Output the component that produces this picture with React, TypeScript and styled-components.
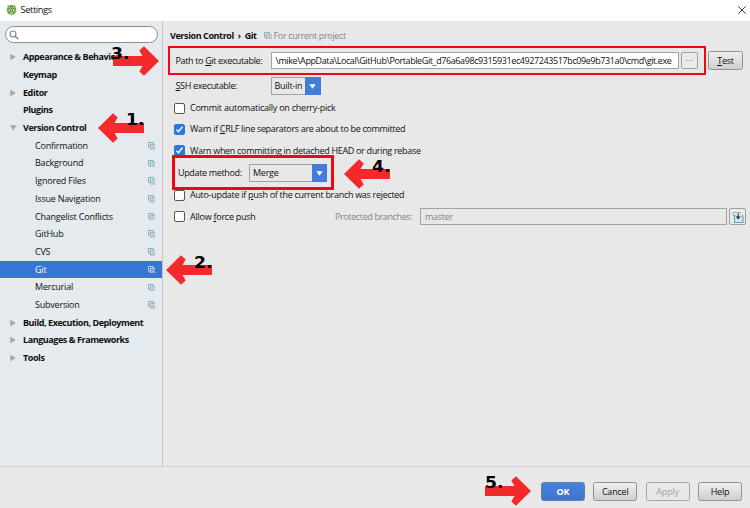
import React from "react";
import styled, { createGlobalStyle, css } from "styled-components";

const Global = createGlobalStyle`
  * { box-sizing: border-box; }
  body { margin: 0; background: #e8e8e8; }
`;

const Window = styled.div`
  position: relative;
  display: flex;
  flex-direction: column;
  width: 750px;
  height: 508px;
  overflow: hidden;
  background: #e8e8e8;
  color: #101010;
  font-family: "Open Sans", "Noto Sans", sans-serif;
  font-size: 9px;
  line-height: 14px;
  white-space: nowrap;
`;

const TitleBar = styled.header`
  display: flex;
  align-items: center;
  height: 21px;
  padding: 0 4.5px 2px 5.5px;
  background: #fff;
`;

const Title = styled.span`
  flex: 1;
  margin-left: 4px;
  font-size: 9.3px;
  letter-spacing: -0.4px;
`;

const Body = styled.div`
  display: flex;
  height: 446px;
  border-bottom: 1px solid #d0d0d0;
`;

const Sidebar = styled.aside`
  width: 163px;
  padding-top: 5px;
  background: #e4eaee;
  border-right: 1px solid #c3c5c7;
`;

const SearchBox = styled.div`
  display: flex;
  align-items: center;
  width: 153px;
  height: 17px;
  margin: 0 0 5.5px 5px;
  padding-left: 3px;
  background: #fff;
  border: 1px solid #8b8e90;
  border-radius: 9px;
`;

const TreeRow = styled.div<{ $selected?: boolean }>`
  display: flex;
  align-items: center;
  height: 17.69px;
  padding: 0 7px 0 10px;
  ${(p) => p.$selected && css`background: #3875d7; color: #fff;`}
`;

const Twisty = styled.span<{ $depth: number }>`
  display: flex;
  width: ${(p) => (p.$depth ? 25 : 13)}px;
`;

const TreeLabel = styled.span<{ $bold: boolean }>`
  flex: 1;
  font-weight: ${(p) => (p.$bold ? 700 : 400)};
  letter-spacing: ${(p) => (p.$bold ? -0.43 : -0.21)}px;
`;

const Content = styled.main`
  flex: 1;
  padding: 5px 3px 0 7px;
`;

const Line = styled.div<{ $h: number; $pad?: number }>`
  display: flex;
  align-items: center;
  height: ${(p) => p.$h}px;
  padding-left: ${(p) => p.$pad ?? 0}px;
`;

const Text = styled.span<{ $ls?: number; $bold?: boolean; $muted?: boolean; $w?: number }>`
  flex: none;
  width: ${(p) => (p.$w ? `${p.$w}px` : "auto")};
  font-weight: ${(p) => (p.$bold ? 700 : 400)};
  color: ${(p) => (p.$muted ? "#858585" : "inherit")};
  letter-spacing: ${(p) => p.$ls ?? -0.35}px;
  u { text-decoration-thickness: 1px; text-underline-offset: 1px; }
`;

const Chevron = styled.span`
  margin: 0 2px;
`;

const Field = styled.div<{ $w: number; $disabled?: boolean; $ls?: number }>`
  width: ${(p) => p.$w}px;
  height: 17px;
  padding-left: ${(p) => (p.$disabled ? 4 : 3.5)}px;
  overflow: hidden;
  line-height: ${(p) => (p.$disabled ? 16 : 15)}px;
  border: 1px solid #a3a3a3;
  background: ${(p) => (p.$disabled ? "#e8e8e8" : "#fff")};
  color: ${(p) => (p.$disabled ? "#858585" : "#101010")};
  letter-spacing: ${(p) => p.$ls ?? -0.3}px;
`;

const MiniButton = styled.button`
  display: flex;
  align-items: center;
  justify-content: center;
  width: 17px;
  height: 17px;
  margin: 0 0 0 2px;
  padding: 0;
  border: 1px solid #a0a0a0;
  border-radius: 2px;
  background: #ebebeb;
`;

const Button = styled.button<{ $w: number; $kind?: "primary" | "disabled" }>`
  width: ${(p) => p.$w}px;
  height: 19px;
  padding: 0;
  border: 1px solid #929292;
  border-radius: 2.5px;
  background: linear-gradient(#efefef, #cfcfcf);
  color: #101010;
  font: 9px/16px "Open Sans", sans-serif;
  letter-spacing: -0.2px;
  u { text-underline-offset: 1px; }
  ${(p) =>
    p.$kind === "primary" &&
    css`background: linear-gradient(#4583df, #3b74cc); border-color: #6f7d94; color: #fff; font-weight: 700;`}
  ${(p) => p.$kind === "disabled" && css`background: #e8e8e8; border-color: #a5a5a5; color: #a2a2a2;`}
`;

const TestButton = styled(Button)`
  margin-left: 10px;
`;

const Combo = styled.div<{ $w: number }>`
  display: flex;
  align-items: stretch;
  width: ${(p) => p.$w}px;
  height: 18px;
  line-height: 16px;
  letter-spacing: -0.25px;
`;

const ComboValue = styled.span`
  flex: 1;
  padding-left: 3px;
  border: 1px solid #a3a3a3;
  border-right: 0;
`;

const ComboArrow = styled.span`
  display: flex;
  align-items: center;
  justify-content: center;
  width: 15.5px;
  background: #437dd9;
`;

const CheckMark = styled.span<{ $on: boolean }>`
  display: flex;
  width: 11px;
  height: 11px;
  margin-right: 5px;
  border: 1px solid ${(p) => (p.$on ? "#2f79dc" : "#555")};
  border-radius: 2px;
  background: ${(p) => (p.$on ? "#2f79dc" : "#fff")};
`;

const CheckCell = styled.div`
  display: flex;
  align-items: center;
  width: 161px;
`;

const Footer = styled.footer`
  display: flex;
  justify-content: flex-end;
  gap: 8.4px;
  height: 41px;
  padding: 15px 8px 0 0;
`;

const Highlight = styled.div<{ $x: number; $y: number; $w: number; $h: number; $b: number }>`
  position: absolute;
  left: ${(p) => p.$x}px;
  top: ${(p) => p.$y}px;
  width: ${(p) => p.$w}px;
  height: ${(p) => p.$h}px;
  border: ${(p) => p.$b}px solid #f00710;
`;

const Callout = styled.div<{ $x: number; $y: number }>`
  position: absolute;
  left: ${(p) => p.$x}px;
  top: ${(p) => p.$y}px;
  width: 46px;
  height: 30px;
  svg { display: block; }
`;

const CalloutNumber = styled.span<{ $x: number; $y: number }>`
  position: absolute;
  left: ${(p) => p.$x}px;
  top: ${(p) => p.$y}px;
  color: #000;
  font: 700 16.5px/20px "DejaVu Sans", sans-serif;
  transform: scaleX(1.04);
  transform-origin: left;
`;

const AndroidLogo = () => (
  <svg width="11" height="12" viewBox="0 0 11 12">
    <path d="M2.4 2.2 1.7.8M8.6 2.2l.7-1.4" stroke="#7ba344" strokeWidth=".8" />
    <circle cx="5.5" cy="6" r="4.9" fill="#84b84c" />
    <path d="M1 5.5C1.6 2.4 3.6 1.3 5.5 1.3s3.9 1.1 4.5 4.2z" fill="#71a340" />
    <circle cx="5.5" cy="6.9" r="2.5" fill="#d9e6cf" />
    <path d="M5.5 4.2 3 10M5.5 4.2 8 10M3.7 7.8h3.6" stroke="#56816b" strokeWidth="1" fill="none" />
    <circle cx="3.6" cy="3.5" r=".5" fill="#fff" />
    <circle cx="7.4" cy="3.5" r=".5" fill="#fff" />
  </svg>
);

const CloseIcon = () => (
  <svg width="8" height="8" viewBox="0 0 8 8">
    <path d="M.3.3l7.4 7.4M7.7.3.3 7.7" stroke="#222" strokeWidth=".9" />
  </svg>
);

const SearchIcon = () => (
  <svg width="10" height="10" viewBox="0 0 10 10" fill="none" stroke="#858585">
    <circle cx="4" cy="4" r="3" strokeWidth="1.1" />
    <path d="M6.2 6.2 9.2 9.2" strokeWidth="1.5" />
  </svg>
);

const CopyIcon = ({ light = false }: { light?: boolean }) => (
  <svg width="7.5" height="7.5" viewBox="0 0 8 8" fill="none">
    <path d="M2 5.5H.5v-5h5V2" stroke={light ? "#c3dcfa" : "#6fa9c9"} />
    <path d="M2.5 2.5h5v5h-5z" stroke={light ? "#dce8f8" : "#9aa5ab"} />
    <path d="M3.7 4.3h2.6M3.7 5.8h2.6" stroke={light ? "#dce8f8" : "#9aa5ab"} strokeWidth=".8" />
  </svg>
);

const DotsIcon = () => (
  <svg width="7" height="2" viewBox="0 0 7 2">
    <path d="M.5.5h1M3 .5h1M5.5.5h1" stroke="#777" />
  </svg>
);

const ShareIcon = () => (
  <svg width="12" height="12" viewBox="0 0 12 12" fill="none">
    <path d="M4 4.5H1v-3h7.5v1.5" stroke="#a8a8a8" />
    <path d="M2.5 5v6.5h8.5V5H9" fill="#d6e8f1" stroke="#55a0c4" strokeWidth="1.1" />
    <path d="M6.2 2.5v4" stroke="#333" strokeWidth="1.2" />
    <path d="M3.6 5.4h5.2L6.2 8.6z" fill="#333" />
  </svg>
);

const DownIcon = () => (
  <svg width="7" height="5" viewBox="0 0 7 5">
    <path d="M.3.2h6.4L3.5 4.8z" fill="#fff" />
  </svg>
);

const Triangle = ({ open }: { open: boolean }) => (
  <svg width="7" height="8" viewBox="0 0 7 8">
    <path d={open ? "M0 1.3h6.4L3.2 6.6z" : "M.3.8 5.8 4 .3 7.2z"} fill="#a3a6a8" />
  </svg>
);

const Arrow = ({ right = false }: { right?: boolean }) => (
  <svg width="46" height="30" viewBox="0 0 46 30">
    <path
      transform={right ? "matrix(-1 0 0 1 46 0)" : undefined}
      d="M0 15 15 .3l4.7 4.2-3.2 5.5H46v10H16.5l3.2 5.5-4.7 4.2z"
      fill="#f3292b"
    />
  </svg>
);

type Item = { label: string; depth?: number; twisty?: "open" | "closed"; selected?: boolean };

const items: Item[] = [
  { label: "Appearance & Behavior", twisty: "closed" },
  { label: "Keymap" },
  { label: "Editor", twisty: "closed" },
  { label: "Plugins" },
  { label: "Version Control", twisty: "open" },
  { label: "Confirmation", depth: 1 },
  { label: "Background", depth: 1 },
  { label: "Ignored Files", depth: 1 },
  { label: "Issue Navigation", depth: 1 },
  { label: "Changelist Conflicts", depth: 1 },
  { label: "GitHub", depth: 1 },
  { label: "CVS", depth: 1 },
  { label: "Git", depth: 1, selected: true },
  { label: "Mercurial", depth: 1 },
  { label: "Subversion", depth: 1 },
  { label: "Build, Execution, Deployment", twisty: "closed" },
  { label: "Languages & Frameworks", twisty: "closed" },
  { label: "Tools", twisty: "closed" },
];

const Check = ({ on = false, ls, children }: { on?: boolean; ls?: number; children: React.ReactNode }) => (
  <>
    <CheckMark $on={on}>
      {on && (
        <svg width="9" height="9" viewBox="0 0 9 9">
          <path d="M1.5 4.7 3.5 6.8 7.4 1.8" fill="none" stroke="#fff" strokeWidth="1.4" />
        </svg>
      )}
    </CheckMark>
    <Text $ls={ls}>{children}</Text>
  </>
);

const callouts = [
  { n: "1.", x: 98, y: 113, tx: 27.5, ty: -3 },
  { n: "2.", x: 166, y: 255, tx: 28, ty: -2 },
  { n: "3.", x: 113, y: 46, tx: -2.5, ty: -2, right: true },
  { n: "4.", x: 344, y: 159, tx: 28, ty: -2 },
  { n: "5.", x: 485, y: 476, tx: -0.5, ty: -3, right: true },
];

export default function App() {
  return (
    <Window>
      <Global />
      <TitleBar>
        <AndroidLogo />
        <Title>Settings</Title>
        <CloseIcon />
      </TitleBar>
      <Body>
        <Sidebar>
          <SearchBox>
            <SearchIcon />
          </SearchBox>
          {items.map((it) => (
            <TreeRow key={it.label} $selected={it.selected}>
              <Twisty $depth={it.depth ?? 0}>{it.twisty && <Triangle open={it.twisty === "open"} />}</Twisty>
              <TreeLabel $bold={!it.depth}>{it.label}</TreeLabel>
              {it.depth && <CopyIcon light={it.selected} />}
            </TreeRow>
          ))}
        </Sidebar>
        <Content>
          <Line $h={19}>
            <Text $bold $w={94} $ls={-0.4}>Version Control<Chevron> › </Chevron>Git</Text>
            <CopyIcon />
            <Text $muted $ls={-0.34}>&nbsp;For current project</Text>
          </Line>
          <Line $h={31} $pad={5.5}>
            <Text $w={95.5}>Path to <u>G</u>it executable:</Text>
            <Field $w={408} $ls={-0.4}>\mike\AppData\Local\GitHub\PortableGit_d76a6a98c9315931ec4927243517bc09e9b731a0\cmd\git.exe</Field>
            <MiniButton>
              <DotsIcon />
            </MiniButton>
            <TestButton $w={35}><u>T</u>est</TestButton>
          </Line>
          <Line $h={20} $pad={5.5}>
            <Text $w={95}><u>S</u>SH executable:</Text>
            <Combo $w={50}>
              <ComboValue>Built-in</ComboValue>
              <ComboArrow><DownIcon /></ComboArrow>
            </Combo>
          </Line>
          <Line $h={24} $pad={4}><Check ls={-0.24}>Commit automatically on cherry-pick</Check></Line>
          <Line $h={18} $pad={4}><Check on ls={-0.33}>Warn if <u>C</u>RLF line separators are about to be committed</Check></Line>
          <Line $h={25} $pad={4}><Check on ls={-0.32}>Warn when committing in detached HEAD or during rebase</Check></Line>
          <Line $h={20} $pad={8}>
            <Text $w={71}>Update method:</Text>
            <Combo $w={78}>
              <ComboValue>Merge</ComboValue>
              <ComboArrow><DownIcon /></ComboArrow>
            </Combo>
          </Line>
          <Line $h={24} $pad={4}><Check ls={-0.3}>Auto-update if <u>p</u>ush of the current branch was rejected</Check></Line>
          <Line $h={19} $pad={4}>
            <CheckCell><Check ls={-0.25}>Allow <u>f</u>orce push</Check></CheckCell>
            <Text $muted $w={85} $ls={-0.38}>Protected branches:</Text>
            <Field $w={307} $disabled>master</Field>
            <MiniButton><ShareIcon /></MiniButton>
          </Line>
        </Content>
      </Body>
      <Footer>
        <Button $w={44} $kind="primary">OK</Button>
        <Button $w={44}>Cancel</Button>
        <Button $w={44} $kind="disabled">Apply</Button>
        <Button $w={44}>Help</Button>
      </Footer>
      <Highlight $x={168} $y={46} $w={538} $h={29} $b={2.5} />
      <Highlight $x={172} $y={155} $w={162} $h={35} $b={3} />
      {callouts.map((c) => (
        <Callout key={c.n} $x={c.x} $y={c.y}>
          <Arrow right={c.right} />
          <CalloutNumber $x={c.tx} $y={c.ty}>{c.n}</CalloutNumber>
        </Callout>
      ))}
    </Window>
  );
}
